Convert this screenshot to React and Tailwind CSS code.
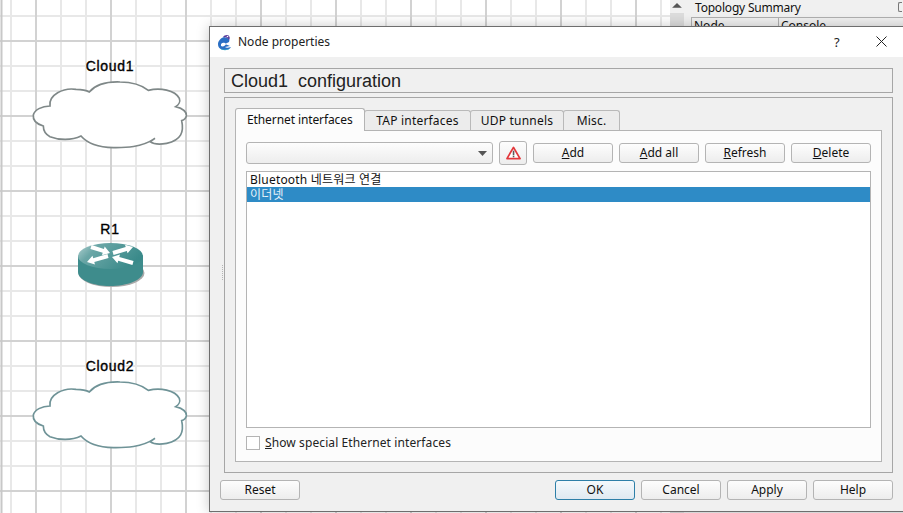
import React from 'react';

const FONT = "font-['Noto_Sans','Noto_Sans_CJK_KR',sans-serif]";
const NODE_LABEL = "text-center text-[14px] leading-[16px] tracking-[0.7px] text-black [-webkit-text-stroke:0.35px_black] font-['Liberation_Sans',sans-serif]";

const CLOUD_PATH =
    'M150 318 C145 285 190 262 228 268 C245 268 258 270 268 276 C290 250 330 245 360 246 C395 246 425 255 445 271 C480 262 525 270 538 295 C542 305 535 315 527 320 C545 325 560 335 559 347 C558 355 552 360 545 362 C552 395 545 420 500 430 C480 434 460 432 450 425 C455 422 460 418 465 415 C420 445 370 443 340 443 C300 442 262 430 243 408 C215 422 175 420 150 410 C135 402 130 390 130 378 C110 372 98 360 100 345 C103 330 125 318 150 318 Z';

const Cloud = ({ label, top, stroke }) => (
    <div className="absolute left-[30px] w-[160px]" style={{ top }}>
        <div className={`h-[22px] ${NODE_LABEL}`}>{label}</div>
        <svg width="160" height="70" viewBox="90 240 480 210">
            <path d={CLOUD_PATH} fill="#ffffff" stroke={stroke} strokeWidth="5" />
        </svg>
    </div>
);

// tail -> tip arrow, used for the four router arrows
const arrowPoints = (x1, y1, x2, y2) => {
    const len = Math.hypot(x2 - x1, y2 - y1);
    const ux = (x2 - x1) / len;
    const uy = (y2 - y1) / len;
    const nx = -uy;
    const ny = ux;
    const bx = x2 - ux * 7;
    const by = y2 - uy * 7;
    const p = [
        [x1 + nx * 2, y1 + ny * 2],
        [bx + nx * 2, by + ny * 2],
        [bx + nx * 4.5, by + ny * 4.5],
        [x2, y2],
        [bx - nx * 4.5, by - ny * 4.5],
        [bx - nx * 2, by - ny * 2],
        [x1 - nx * 2, y1 - ny * 2],
    ];
    return p.map(q => q.join(',')).join(' ');
};

const Router = () => (
    <div className="absolute left-[70px] top-[221px] w-[80px]">
        <div className={`h-[20px] ${NODE_LABEL}`}>R1</div>
        <svg width="80" height="50" viewBox="0 0 80 50">
            <defs>
                <linearGradient id="routerTop" x1="0" y1="0" x2="1" y2="0.4">
                    <stop offset="0" stopColor="#b5d3d3" />
                    <stop offset="0.3" stopColor="#6aa6a6" />
                    <stop offset="1" stopColor="#3a8a8a" />
                </linearGradient>
            </defs>
            <ellipse cx="41.5" cy="32" rx="33" ry="14" fill="#a9a9a9" />
            <path d="M8 15 V31 C8 39 23 45 40 45 C57 45 73 39 73 31 V15 Z" fill="#3e8c8c" />
            <ellipse cx="40.5" cy="15" rx="32.5" ry="13" fill="url(#routerTop)" />
            <g fill="#ffffff">
                <polygon points={arrowPoints(21, 6, 40, 12)} />
                <polygon points={arrowPoints(43, 12, 63, 6)} />
                <polygon points={arrowPoints(38, 15, 17, 21)} />
                <polygon points={arrowPoints(63, 22, 42, 16)} />
            </g>
        </svg>
    </div>
);

const Btn = ({ children, primary }) => (
    <button
        className={`w-[80px] h-[20px] rounded-[3px] border pb-[1px] text-[12px] leading-[16px] text-[#111] bg-gradient-to-b ${
            primary ? 'border-[#2d7fa8] from-[#f4f9fc] to-[#dfe9f1]' : 'border-[#b4b4b4] from-[#fdfdfd] to-[#ededed]'
        }`}
    >
        {children}
    </button>
);

const Tab = ({ children, width, active }) =>
    active ? (
        <div
            className="h-[23px] -mb-px z-10 rounded-t-[3px] border border-b-0 border-[#b4b4b4] bg-[#fcfcfc] pl-[11px] pt-[2px] text-[12px] leading-[17px] tracking-[-0.1px] text-[#111]"
            style={{ width }}
        >
            {children}
        </div>
    ) : (
        <div
            className="h-[20px] -ml-px rounded-t-[3px] border border-b-0 border-[#b9b9b9] bg-[#ececec] text-center text-[12px] leading-[20px] tracking-[0.2px] text-[#111]"
            style={{ width }}
        >
            {children}
        </div>
    );

const MAJOR_H = [41, 116, 191, 266, 341, 416, 491];
const MINOR_H = [16, 66, 91, 141, 166, 216, 241, 291, 316, 366, 391, 441, 466];
const MAJOR_V = [36, 111, 186, 261, 336, 411, 486, 561, 636];
const MINOR_V = [11, 61, 86, 136, 161, 211, 236, 286, 311, 361, 386, 436, 461, 511, 536, 586, 611, 661];

const Grid = () => (
    <svg className="absolute inset-0" width="670" height="513">
        {MINOR_H.map(y => <line key={y} x1="0" x2="670" y1={y} y2={y} stroke="#e8e8e8" strokeWidth="2" />)}
        {MINOR_V.map(x => <line key={x} x1={x} x2={x} y1="0" y2="513" stroke="#e8e8e8" strokeWidth="2" />)}
        {MAJOR_H.map(y => <line key={y} x1="0" x2="670" y1={y} y2={y} stroke="#d2d2d2" strokeWidth="2" />)}
        {MAJOR_V.map(x => <line key={x} x1={x} x2={x} y1="0" y2="513" stroke="#d2d2d2" strokeWidth="2" />)}
        <line x1="1.5" x2="1.5" y1="0" y2="513" stroke="#c8c8c8" strokeWidth="2" />
    </svg>
);

const AppIcon = () => (
    <svg width="16" height="17" viewBox="0 0 16 17">
        <path d="M7 3 C4 4 1 7 1 10 C1 14 4 16 8 16 C11 16 13 15 14 13 C11 14 9 14 8 13 L13 12 L8 10 L12 8 C13 6 12 4 10 4 Z" fill="#2a6fc4" />
        <path d="M6 3 C7 1 11 0 12 2 C13 3 13 5 12 6 C11 4 9 3 6 3 Z" fill="#5b3f9e" />
        <circle cx="10.5" cy="2.5" r="0.8" fill="#ffffff" />
        <path d="M4 10 C6 8 8 9 9 10 C8 12 6 13 4 12 Z" fill="#ffffff" />
        <path d="M3 14 C6 16 10 16 13 14 C11 17 5 17 3 14 Z" fill="#35b0c8" />
    </svg>
);

const WarnIcon = () => (
    <svg width="15" height="14" viewBox="0 0 16 15">
        <path d="M8 1.5 L15 13.5 H1 Z" fill="#ffffff" stroke="#e2383c" strokeWidth="1.9" strokeLinejoin="round" />
        <rect x="7.2" y="5" width="1.7" height="4.8" fill="#5a5a5a" />
        <rect x="7.2" y="10.4" width="1.7" height="1.7" fill="#5a5a5a" />
    </svg>
);

const App = () => {
    return (
        <div className={`relative flex h-[513px] w-[903px] overflow-hidden bg-white ${FONT}`}>
            <div className="relative h-full w-[670px] shrink-0 bg-white">
                <Grid />
                <Cloud label="Cloud1" top={58} stroke="#7f8888" />
                <Router />
                <Cloud label="Cloud2" top={358} stroke="#6f9397" />
            </div>

            <div className="flex h-full w-[14px] shrink-0 flex-col items-center bg-[#f0f0f0]">
                <svg className="mt-[3px]" width="10" height="6" viewBox="0 0 10 6"><path d="M5 0 L10 5 H0 Z" fill="#555" /></svg>
                <div className="mt-[4px] h-full w-full bg-[#dcdcdc]" />
            </div>

            <div className="h-full flex-1 bg-[#f0f0f0] pl-[7px] text-[12px] text-[#111]">
                <div className="flex h-[17px] items-start justify-between pl-[4px] pr-[1px] leading-[15px] tracking-[-0.2px]">
                    <span>Topology Summary</span>
                    <span className="mt-[2px] h-[10px] w-[4px] rounded-l-[2px] border border-r-0 border-[#777]" />
                </div>
                <div className="flex h-[20px] border-l border-t border-[#b0b0b0] leading-[16px]">
                    <div className="w-[87px] border-r border-[#b0b0b0] pl-[2px]">Node</div>
                    <div className="pl-[2px]">Console</div>
                </div>
            </div>

            {/* dialog window */}
            <div className="absolute left-[209px] top-[26px] flex h-[486px] w-[706px] flex-col border border-[#6e6e6e] bg-[#f0f0f0] shadow-[0_0_12px_rgba(0,0,0,0.22)]">
                <div className="flex h-[30px] shrink-0 items-center bg-white pl-[7px] text-[12px] text-[#222]">
                    <AppIcon />
                    <span className="ml-[5px]">Node properties</span>
                    <span className="absolute left-[624px] top-[6px] text-[13px]">?</span>
                    <svg className="absolute left-[666px] top-[9px]" width="11" height="11" viewBox="0 0 11 11">
                        <path d="M0.5 0.5 L10.5 10.5 M10.5 0.5 L0.5 10.5" stroke="#222" strokeWidth="1" />
                    </svg>
                </div>

                <div className="flex flex-1 flex-col pl-[14px] pt-[11px]">
                    <div className="h-[25px] w-[669px] border border-[#a6a6a6] pl-[6px] text-[18px] leading-[24px] text-[#222] font-['Liberation_Sans',sans-serif]">
                        Cloud1&nbsp; configuration
                    </div>

                    <div className="mt-[4px] h-[376px] w-[669px] border border-[#a6a6a6] pl-[10px] pt-[10px]">
                        <div className="flex h-[22px] items-end">
                            <Tab width={130} active>Ethernet interfaces</Tab>
                            <Tab width={107}>TAP interfaces</Tab>
                            <Tab width={94}>UDP tunnels</Tab>
                            <Tab width={57}>Misc.</Tab>
                        </div>

                        <div className="h-[332px] w-[647px] border border-[#b4b4b4] bg-[#fcfcfc] pl-[10px] pt-[10px]">
                            <div className="flex h-[24px] items-center">
                                <div className="flex h-[22px] w-[247px] items-center justify-end rounded-[3px] border border-[#b4b4b4] bg-gradient-to-b from-[#fdfdfd] to-[#ededed] pr-[5px]">
                                    <svg width="9" height="5" viewBox="0 0 9 5"><path d="M0 0 H9 L4.5 5 Z" fill="#555" /></svg>
                                </div>
                                <button className="ml-[6px] flex h-[24px] w-[28px] items-center justify-center rounded-[3px] border border-[#b4b4b4] bg-gradient-to-b from-[#fdfdfd] to-[#ededed]">
                                    <WarnIcon />
                                </button>
                                <div className="ml-[6px] flex gap-[6px]">
                                    <Btn><u>A</u>dd</Btn>
                                    <Btn><u>A</u>dd all</Btn>
                                    <Btn><u>R</u>efresh</Btn>
                                    <Btn><u>D</u>elete</Btn>
                                </div>
                            </div>

                            <div className="mt-[6px] h-[257px] w-[625px] border border-[#b4b4b4] bg-white text-[12px] leading-[15px] text-[#111]">
                                <div className="h-[15px] overflow-hidden pl-[3px] tracking-[0.2px]">Bluetooth 네트워크 연결</div>
                                <div className="h-[15px] overflow-hidden bg-[#2e8bc6] pl-[3px] tracking-[0.2px] text-[#e8f2f8]">이더넷</div>
                            </div>

                            <div className="mt-[8px] flex h-[15px] items-start text-[12px] leading-[14px] tracking-[0.1px] text-[#222]">
                                <span className="h-[14px] w-[14px] border border-[#b4b4b4] bg-white" />
                                <span className="ml-[5px]"><u>S</u>how special Ethernet interfaces</span>
                            </div>
                        </div>
                    </div>

                    <div className="mt-[7px] flex w-[673px] -ml-[4px] justify-between">
                        <Btn>Reset</Btn>
                        <div className="flex gap-[6px]">
                            <Btn primary>OK</Btn>
                            <Btn>Cancel</Btn>
                            <Btn>Apply</Btn>
                            <Btn>Help</Btn>
                        </div>
                    </div>
                </div>
            </div>

            {/* splitter grip */}
            <div className="absolute left-[222px] top-[265px] flex flex-col gap-[1px]">
                {[0, 1, 2, 3, 4, 5, 6, 7].map(i => <span key={i} className="h-px w-px bg-[#b5b5b5]" />)}
            </div>
        </div>
    );
};

export default App;
